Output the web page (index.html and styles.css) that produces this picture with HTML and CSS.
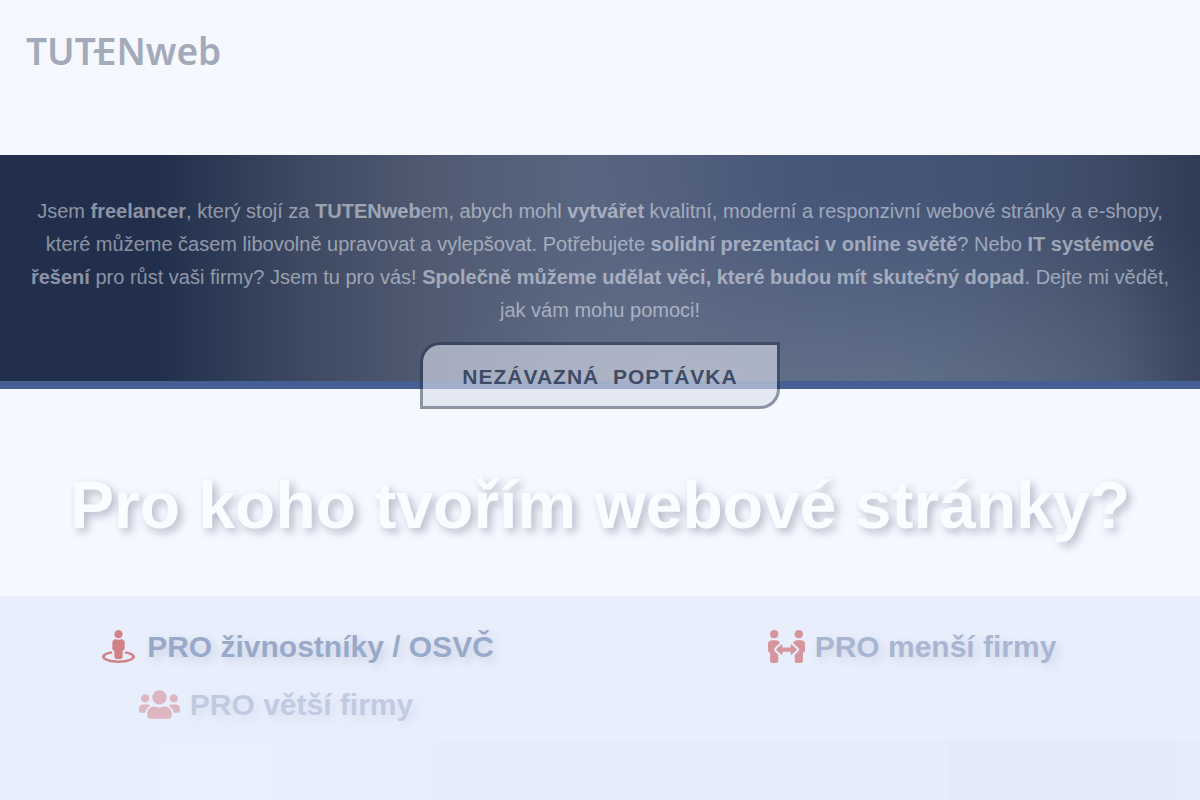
FILE: index.html
```html
<!DOCTYPE html>
<html lang="cs">
<head>
  <meta charset="UTF-8" />
  <meta name="viewport" content="width=device-width, initial-scale=1.0"/>
  <title>TUTENweb</title>
  <link rel="stylesheet" href="styles.css">
</head>
<body>
  <header class="header">
    <a class="logo" href="#">TUT<span class="logo-e">E</span>Nweb</a>
  </header>

  <main>
    <section class="hero">
      <p class="hero-text">Jsem <b>freelancer</b>, který stojí za <b>TUTENweb</b>em, abych mohl <b>vytvářet</b> kvalitní, moderní a responzivní webové stránky a e-shopy, které můžeme časem libovolně upravovat a vylepšovat. Potřebujete <b>solidní prezentaci v online světě</b>? Nebo <b>IT systémové řešení</b> pro růst vaši firmy? Jsem tu pro vás! <b>Společně můžeme udělat věci, které budou mít skutečný dopad</b>. Dejte mi vědět, jak vám mohu pomoci!</p>
      <a class="hero-button" href="#poptavka">NEZÁVAZNÁ&nbsp; POPTÁVKA</a>
    </section>

    <section class="intro">
      <h2>Pro koho tvořím webové stránky?</h2>
    </section>

    <section class="clients">
      <div class="client-list">
        <h3 class="client client-solo">
          <svg class="icon" viewBox="0 0 512 512" width="33" height="33" aria-hidden="true"><path d="M367.9 329.76c-4.62 5.3-9.78 10.1-15.9 13.65v22.94c66.52 9.34 112 28.05 112 49.65 0 30.93-93.12 56-208 56S48 446.93 48 416c0-21.6 45.48-40.3 112-49.65v-22.94c-6.12-3.55-11.28-8.35-15.9-13.65C58.87 345.34 0 378.05 0 416c0 53.02 114.62 96 256 96s256-42.98 256-96c0-37.95-58.87-70.66-144.1-86.24zM256 128c35.35 0 64-28.65 64-64S291.35 0 256 0s-64 28.65-64 64 28.65 64 64 64zm-64 192v96c0 17.67 14.33 32 32 32h64c17.67 0 32-14.33 32-32v-96c17.67 0 32-14.33 32-32v-96c0-26.51-21.49-48-48-48h-11.8c-11.07 5.03-23.26 8-36.2 8s-25.13-2.97-36.2-8H208c-26.51 0-48 21.49-48 48v96c0 17.67 14.33 32 32 32z"/></svg>
          <span>PRO živnostníky / OSVČ</span>
        </h3>
        <h3 class="client client-small">
          <svg class="icon" viewBox="0 0 576 512" width="37" height="33" aria-hidden="true"><path d="M96,128A64,64,0,1,0,32,64,64,64,0,0,0,96,128Zm0,176.08a44.11,44.11,0,0,1,13.64-32L181.77,204c1.65-1.55,3.77-2.31,5.61-3.57A63.91,63.91,0,0,0,128,160H64A64,64,0,0,0,0,224v96a32,32,0,0,0,32,32V480a32,32,0,0,0,32,32h64a32,32,0,0,0,32-32V383.61l-50.36-47.53A44.08,44.08,0,0,1,96,304.08ZM480,128a64,64,0,1,0-64-64A64,64,0,0,0,480,128Zm32,32H448a63.91,63.91,0,0,0-59.38,40.42c1.84,1.27,4,2,5.62,3.59l72.12,68.06a44.37,44.37,0,0,1,0,64L416,383.62V480a32,32,0,0,0,32,32h64a32,32,0,0,0,32-32V352a32,32,0,0,0,32-32V224A64,64,0,0,0,512,160ZM444.4,295.34l-72.12-68.06A12,12,0,0,0,352,236v36H224V236a12,12,0,0,0-20.28-8.73L131.6,295.34a12.4,12.4,0,0,0,0,17.47l72.12,68.07A12,12,0,0,0,224,372.14V336H352v36.14a12,12,0,0,0,20.28,8.74l72.12-68.07A12.4,12.4,0,0,0,444.4,295.34Z"/></svg>
          <span>PRO menší firmy</span>
        </h3>
        <h3 class="client client-large">
          <svg class="icon" viewBox="0 0 640 512" width="41" height="33" aria-hidden="true"><path d="M96 224c35.3 0 64-28.7 64-64s-28.7-64-64-64-64 28.7-64 64 28.7 64 64 64zm448 0c35.3 0 64-28.7 64-64s-28.7-64-64-64-64 28.7-64 64 28.7 64 64 64zm32 32h-64c-17.6 0-33.5 7.1-45.1 18.6 40.3 22.1 68.9 62 75.1 109.4h66c17.7 0 32-14.3 32-32v-32c0-35.3-28.7-64-64-64zm-256 0c61.9 0 112-50.1 112-112S381.9 32 320 32 208 82.1 208 144s50.1 112 112 112zm76.8 32h-8.3c-20.8 10-43.9 16-68.5 16s-47.6-6-68.5-16h-8.3C179.6 288 128 339.6 128 403.2V432c0 26.5 21.5 48 48 48h288c26.5 0 48-21.5 48-48v-28.8c0-63.6-51.6-115.2-115.2-115.2zm-223.7-13.4C161.5 263.1 145.6 256 128 256H64c-35.3 0-64 28.7-64 64v32c0 17.7 14.3 32 32 32h65.9c6.3-47.4 34.9-87.3 75.2-109.4z"/></svg>
          <span>PRO větší firmy</span>
        </h3>
      </div>
      <div class="preview"></div>
    </section>
  </main>
</body>
</html>
```
FILE: styles.css
```css
* {
  box-sizing: border-box;
}

body {
  margin: 0;
  font-family: "Liberation Sans", Arial, sans-serif;
  background: #f5f8ff;
  color: #222f4c;
}

.header {
  height: 155px;
  padding: 24px 26px;
}

.logo {
  display: inline-block;
  font-family: "Noto Sans", "Open Sans", sans-serif;
  font-size: 37px;
  font-weight: 600;
  line-height: 54px;
  color: #a3aab9;
  text-decoration: none;
}

.logo-e {
  position: relative;
}

/* crossbar of the E runs out to the left */
.logo-e::before {
  content: "";
  position: absolute;
  left: -2px;
  top: 24px;
  width: 8px;
  height: 4px;
  background: #a3aab9;
  transform: skewX(-30deg);
}

.hero {
  display: flex;
  flex-direction: column;
  align-items: center;
  padding: 40px 30px 0;
  border-bottom: 8px solid #455f92;
  background:
    linear-gradient(90deg, transparent 93%, rgba(38, 48, 72, 0.35) 100%),
    radial-gradient(ellipse 480px 220px at 75% 110%, rgba(118, 132, 152, 0.6), transparent),
    radial-gradient(ellipse 260px 240px at 71% 0, rgba(66, 84, 120, 0.7), transparent),
    linear-gradient(90deg, #222f4c 0, #222f4c 13%, #2f3c57 19%, #3f4b63 26%, #505b72 36%, #586580 48%, #586480 56%, #4c5a7a 68%, #455474 78%, #404e6b 88%, #36435e 100%);
  background-origin: border-box;
  background-clip: padding-box;
}

.hero-text {
  margin: 0 0 15px;
  font-size: 20px;
  line-height: 33px;
  text-align: center;
  color: rgba(245, 248, 255, 0.5);
}

.hero-button {
  margin-bottom: -28px;
  padding: 20px 39px 17px;
  border: 3px solid rgba(34, 47, 76, 0.5);
  border-radius: 20px 0;
  background: rgba(218, 222, 236, 0.62);
  background-clip: padding-box;
  font-size: 21px;
  font-weight: bold;
  line-height: 24px;
  letter-spacing: 1px;
  color: rgba(34, 47, 76, 0.8);
  text-decoration: none;
}

.intro {
  padding: 78px 24px 52px;
  text-align: center;
}

.intro h2 {
  margin: 0;
  font-size: 66px;
  line-height: 77px;
  color: #fbfcff;
  text-shadow: 4px 4px 8px rgba(34, 47, 76, 0.3);
}

.clients {
  padding-top: 22px;
  background: #e8eefc;
}

.client-list {
  display: grid;
  grid-template-columns: 1fr 1fr;
  column-gap: 32px;
  padding-left: 8px;
}

.client {
  display: flex;
  justify-content: center;
  align-items: center;
  gap: 10px;
  height: 58px;
  margin: 0;
  font-size: 30px;
  color: #455f92;
  text-shadow: 4px 4px 8px rgba(34, 47, 76, 0.3);
}

.client-solo {
  gap: 12px;
  opacity: 0.48;
}

.client-small {
  padding-left: 4px;
  opacity: 0.39;
}

.client-large {
  padding-right: 44px;
  opacity: 0.24;
}

.icon {
  margin-bottom: 2px;
  fill: #b90e0a;
}

/* faint top edge of the site preview */
.preview {
  height: 62px;
  margin-top: 4px;
  border-top: 2px solid #e8eefc;
  background:
    linear-gradient(90deg, transparent 79%, rgba(226, 232, 246, 0.4) 79%, rgba(226, 232, 246, 0.4) 98%, transparent 98%),
    linear-gradient(90deg, #e7edfb 12%, #e9effd 13%, #e9effd 23%, #e7edfb 24%, #e7edfb 36%, #e6ecfa 37%);
  background-clip: padding-box;
}
```
